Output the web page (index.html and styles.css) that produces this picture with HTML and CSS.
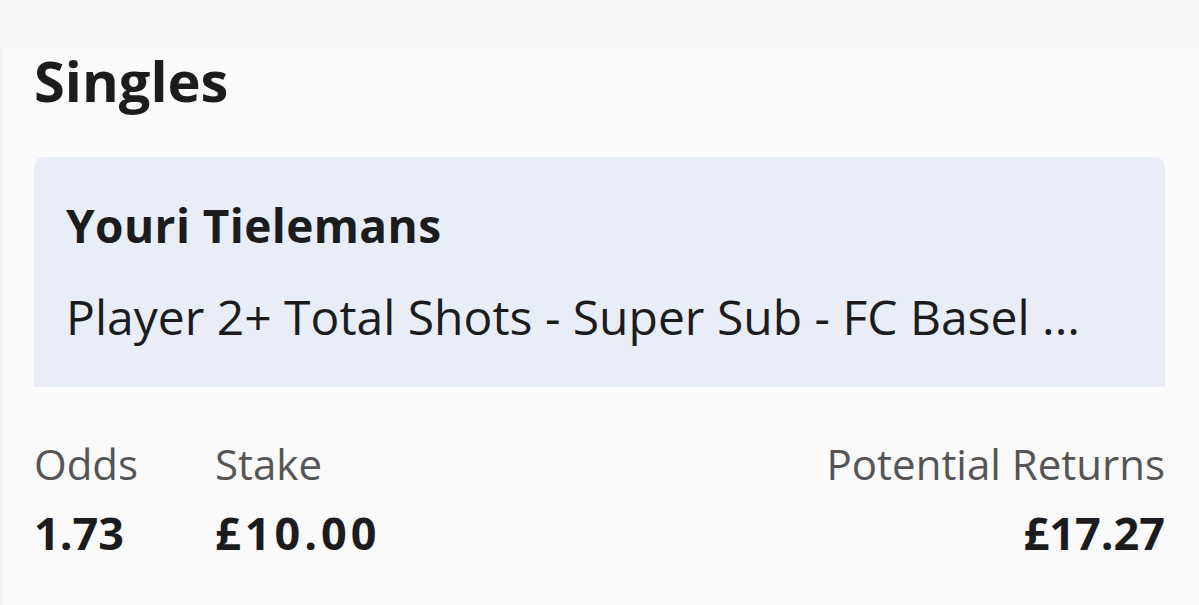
FILE: index.html
```html
<!DOCTYPE html>
<html>
<head>
<meta charset="utf-8">
<link rel="stylesheet" href="styles.css">
</head>
<body>
<div class="topbar"></div>
<main class="page">
  <h1 class="title">Singles</h1>
  <section class="card">
    <div class="player">Youri Tielemans</div>
    <div class="market">Player 2+ Total Shots - Super Sub - FC Basel ...</div>
  </section>
  <section class="summary">
    <div class="col odds">
      <div class="label">Odds</div>
      <div class="value">1.73</div>
    </div>
    <div class="col stake">
      <div class="label">Stake</div>
      <div class="value wide">£10.00</div>
    </div>
    <div class="col returns">
      <div class="label">Potential Returns</div>
      <div class="value">£17.27</div>
    </div>
  </section>
</main>
</body>
</html>
```
FILE: styles.css
```css
html, body {
  margin: 0;
  padding: 0;
  background: #fafafa;
  width: 1199px;
  height: 605px;
  overflow: hidden;
  font-family: "Open Sans", sans-serif;
  color: #1c1c1e;
}
.topbar {
  height: 46px;
  background: #f9f8f9;
}
.page {
  box-sizing: border-box;
  height: 559px;
  padding: 0 34px 0 31px;
  border-left: 3px solid #f5f5f5;
}
.title {
  margin: 0;
  padding-top: 2px;
  font-size: 56px;
  font-weight: 700;
  line-height: 64px;
}
.card {
  margin-top: 45px;
  height: 230px;
  box-sizing: border-box;
  background: #e8edf8;
  border-radius: 10px 10px 0 0;
  padding: 40px 32px 0 32px;
}
.player {
  font-size: 46px;
  font-weight: 700;
  line-height: 56px;
  letter-spacing: 0.4px;
}
.market {
  margin-top: 34px;
  font-size: 48px;
  font-weight: 400;
  line-height: 60px;
}
.summary {
  display: flex;
  margin-top: 52px;
}
.col .label {
  font-size: 42px;
  color: #555555;
  line-height: 50px;
}
.col .value {
  font-size: 45px;
  font-weight: 700;
  line-height: 56px;
  margin-top: 16px;
}
.col .value.wide {
  letter-spacing: 4px;
}
.odds { width: 181px; }
.returns { margin-left: auto; text-align: right; }
```
